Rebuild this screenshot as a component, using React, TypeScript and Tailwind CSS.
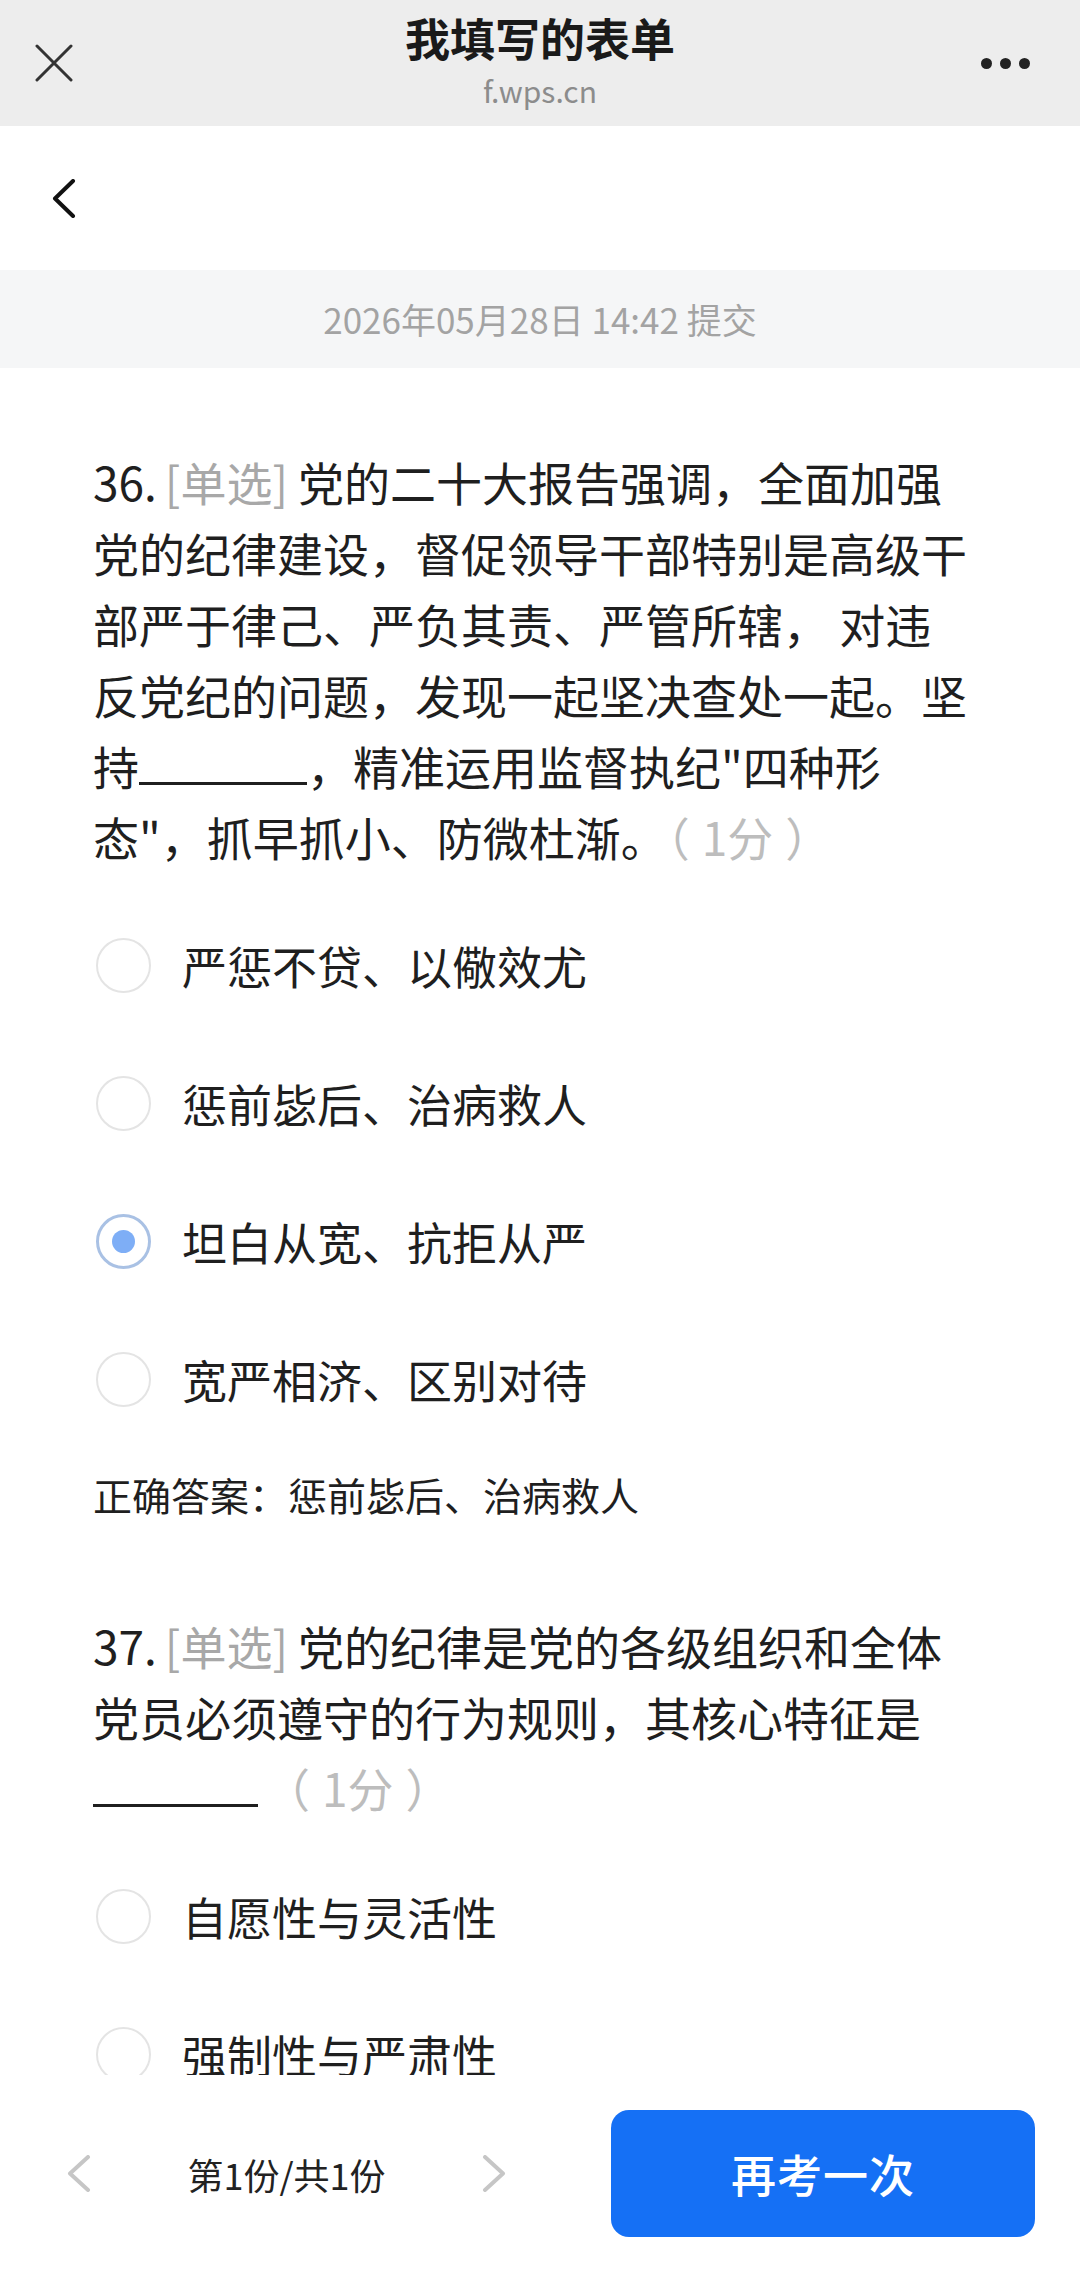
import React from 'react';

const FONT = "font-['Noto_Sans_CJK_SC','Noto_Sans',sans-serif]";

/**
 * Question data - lines are split by hand so the wrap matches the phone layout
 */
type Question = {
  no: string;
  lines: React.ReactNode[];
  options: string[];
  picked?: number;
};

const Blank: React.FC<{ w: string }> = ({ w }) => (
  <span className={`inline-block h-[10px] border-b-[3px] border-[#1f1f1f] ${w}`} />
);

const Score: React.FC = () => (
  <span className="text-[#bdbdbd]">
    （<span className="px-[12px]">1分</span>）
  </span>
);

const Tag: React.FC<{ no: string }> = ({ no }) => (
  <>
    {no}
    <span className="ml-[8px] mr-[10px] text-[#a8a8a8]">[单选]</span>
  </>
);

const Q36: Question = {
  no: '36.',
  lines: [
    <>
      <Tag no="36." />
      党的二十大报告强调，全面加强
    </>,
    '党的纪律建设，督促领导干部特别是高级干',
    '部严于律己、严负其责、严管所辖， 对违',
    '反党纪的问题，发现一起坚决查处一起。坚',
    <>
      持<Blank w="w-[168px]" />，精准运用监督执纪"四种形
    </>,
    <>
      态"，抓早抓小、防微杜渐。<Score />
    </>,
  ],
  options: ['严惩不贷、以儆效尤', '惩前毖后、治病救人', '坦白从宽、抗拒从严', '宽严相济、区别对待'],
  picked: 2,
};

const Q37: Question = {
  no: '37.',
  lines: [
    <>
      <Tag no="37." />
      党的纪律是党的各级组织和全体
    </>,
    '党员必须遵守的行为规则，其核心特征是',
    <>
      <Blank w="w-[165px]" />
      <span className="ml-[6px]">
        <Score />
      </span>
    </>,
  ],
  options: ['自愿性与灵活性', '强制性与严肃性'],
};

const Radio: React.FC<{ on?: boolean }> = ({ on }) =>
  on ? (
    <span className="flex h-[55px] w-[55px] shrink-0 items-center justify-center rounded-full border-[3px] border-[#a9c1e4]">
      <span className="h-[23px] w-[23px] rounded-full bg-[#7eaef6]" />
    </span>
  ) : (
    <span className="h-[55px] w-[55px] shrink-0 rounded-full border-2 border-[#e4e4e4]" />
  );

const QuestionBlock: React.FC<{ q: Question; className?: string }> = ({ q, className }) => (
  <div className={className}>
    <div className="text-[46px] leading-[71px] text-[#1f1f1f]">
      {q.lines.map((line, i) => (
        <div key={i} className="whitespace-nowrap">
          {line}
        </div>
      ))}
    </div>
    <div className="mt-[24px]">
      {q.options.map((opt, i) => (
        <div key={opt} className="flex h-[138px] items-center gap-[31px] pl-[3px]">
          <Radio on={q.picked === i} />
          <span className="text-[45px] leading-none text-[#1f1f1f]">{opt}</span>
        </div>
      ))}
    </div>
  </div>
);

const App: React.FC = () => {
  return (
    <div className={`flex h-[2272px] w-[1080px] flex-col overflow-hidden bg-white ${FONT}`}>
      {/* Browser title bar */}
      <header className="grid h-[126px] shrink-0 grid-cols-[1fr_auto_1fr] bg-[#ededed]">
        <div className="flex items-center pl-[35px]">
          <svg width="38" height="38" viewBox="0 0 38 38" fill="none" stroke="#333" strokeWidth="3" strokeLinecap="round">
            <path d="M2 2 L36 36 M36 2 L2 36" />
          </svg>
        </div>
        <div className="flex flex-col items-center pt-[10px]">
          <span className="text-[45px] font-bold leading-[56px] text-[#1a1a1a]">我填写的表单</span>
          <span className="mt-[6px] text-[30px] leading-[36px] text-[#8c8c8c]">f.wps.cn</span>
        </div>
        <div className="flex items-center justify-end gap-[8px] pr-[50px]">
          <span className="h-[11px] w-[11px] rounded-full bg-[#222]" />
          <span className="h-[11px] w-[11px] rounded-full bg-[#222]" />
          <span className="h-[11px] w-[11px] rounded-full bg-[#222]" />
        </div>
      </header>

      {/* Page nav */}
      <div className="flex h-[144px] shrink-0 items-center pl-[52px]">
        <svg width="24" height="39" viewBox="0 0 24 39" fill="none" stroke="#111" strokeWidth="4" strokeLinecap="round" strokeLinejoin="round">
          <path d="M21 2 L3 19.5 L21 37" />
        </svg>
      </div>

      {/* Submit time */}
      <div className="flex h-[98px] shrink-0 items-center justify-center bg-[#f5f6f7] text-[35px] text-[#a3a3a3]">
        2026年05月28日 14:42 提交
      </div>

      {/* Answers */}
      <main className="flex-1 overflow-hidden px-[93px] pt-[78px]">
        <QuestionBlock q={Q36} />
        <div className="mt-[21px] text-[39px] leading-[50px] text-[#1f1f1f]">正确答案：惩前毖后、治病救人</div>
        <QuestionBlock q={Q37} className="mt-[91px]" />
      </main>

      {/* Bottom bar */}
      <footer className="flex h-[197px] shrink-0 items-center bg-white pl-[67px] pr-[45px]">
        <div className="flex w-[439px] items-center justify-between">
          <svg width="24" height="37" viewBox="0 0 24 37" fill="none" stroke="#c6c6c6" strokeWidth="4" strokeLinecap="round" strokeLinejoin="round">
            <path d="M21 2 L3 18.5 L21 35" />
          </svg>
          <span className="text-[36px] text-[#222]">第1份/共1份</span>
          <svg width="24" height="37" viewBox="0 0 24 37" fill="none" stroke="#c6c6c6" strokeWidth="4" strokeLinecap="round" strokeLinejoin="round">
            <path d="M3 2 L21 18.5 L3 35" />
          </svg>
        </div>
        <button className="ml-auto flex h-[127px] w-[424px] items-center justify-center rounded-[18px] bg-[#1570f5] text-[45px] font-medium tracking-[1px] text-white">
          再考一次
        </button>
      </footer>
    </div>
  );
};

export default App;
